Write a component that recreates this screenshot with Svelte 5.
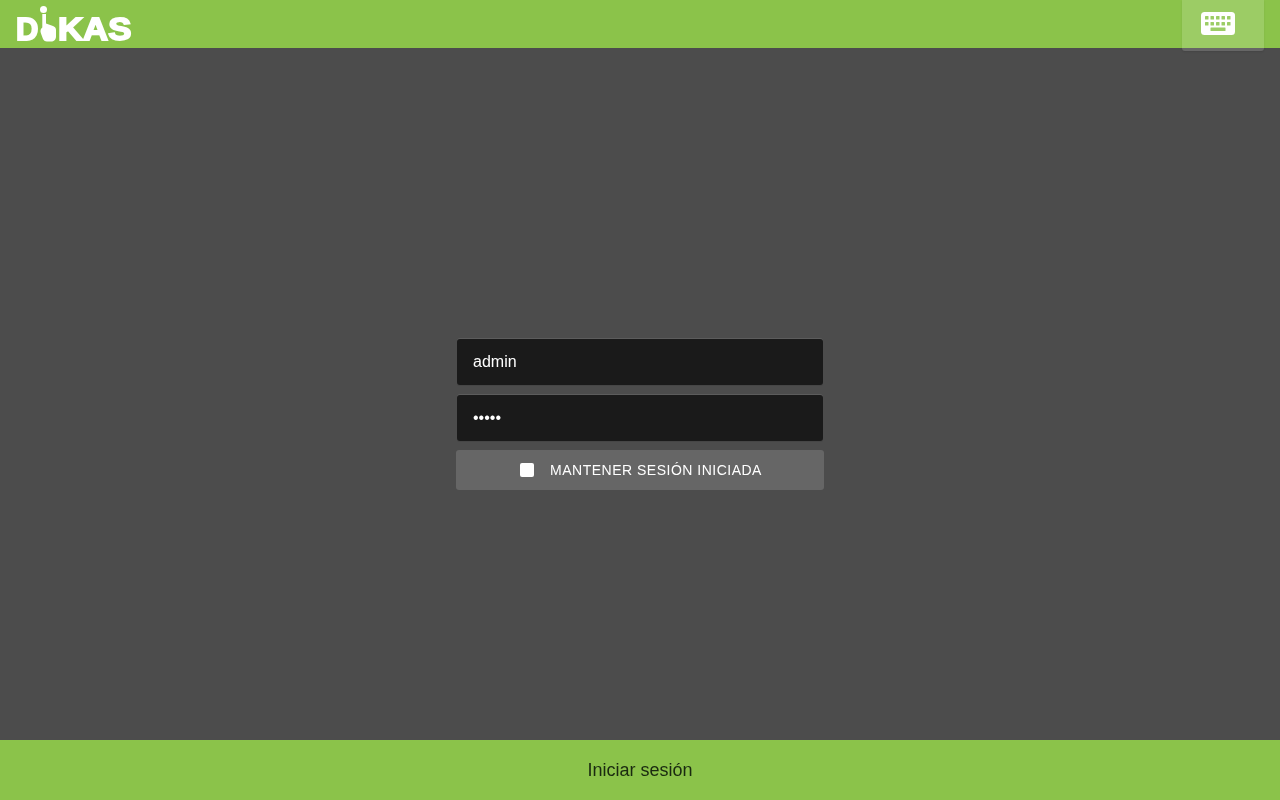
<script>
  const rows = [0, 1];
  const keys = [0, 1, 2, 3, 4];
</script>

<div class="page">
  <header class="top">
    <div class="logo">
      <svg class="pin" width="40" height="42" viewBox="24 4 40 42" aria-hidden="true">
        <circle cx="43.500" cy="9.500" r="3.500" fill="#fff" />
        <path d="M42.300 14H46V23.500L53 26C55 26.800 56 28 56 30V36.500C56 39.500 54 41.500 51 41.500H47C45 41.500 43.500 40.500 42.800 38.500L40.800 33C40 30.500 40.800 28.500 42.300 27.500Z" fill="#fff" />
      </svg>
      <span class="d">D</span><span class="kas">KAS</span>
    </div>
    <button class="kbd" aria-label="Teclado">
      <svg width="34" height="23" viewBox="0 0 34 23" aria-hidden="true">
        <rect width="34" height="23" rx="3.500" fill="#fff" />
        {#each rows as r}
          {#each keys as k}
            <rect x={4 + k * 5.5} y={4 + r * 6} width="3.500" height="3.500" rx="0.500" fill="#9ccd66" />
          {/each}
        {/each}
        <rect x="9.500" y="15.500" width="15" height="3.500" rx="0.500" fill="#9ccd66" />
      </svg>
    </button>
  </header>

  <main class="center">
    <form class="form">
      <input class="field" type="text" value="admin" />
      <input class="field" type="password" value="admin" />
      <label class="keep">
        <span class="box"></span>
        <span>MANTENER SESIÓN INICIADA</span>
      </label>
    </form>
  </main>

  <footer class="bottom">Iniciar sesión</footer>
</div>

<style>
  :global(body) {
    margin: 0;
    background: #4c4c4c;
  }
  .page {
    display: flex;
    flex-direction: column;
    height: 800px;
    font-family: "Liberation Sans", Arial, sans-serif;
    color: #fff;
    overflow: hidden;
    will-change: transform;
  }
  .top {
    flex: 0 0 48px;
    height: 48px;
    background: #8bc34a;
    display: flex;
    justify-content: space-between;
    padding: 0 16px;
    box-sizing: border-box;
    position: relative;
    z-index: 1;
  }
  .logo {
    position: relative;
    width: 118px;
    height: 48px;
    color: #fff;
    font-family: "Liberation Sans", Arial, sans-serif;
    font-weight: 700;
    font-size: 31px;
    line-height: 32px;
    white-space: nowrap;
    -webkit-text-stroke: 1.800px #fff;
  }
  .pin {
    position: absolute;
    left: 8px;
    top: 4px;
  }
  .d {
    position: absolute;
    left: 0;
    top: 14px;
  }
  .kas {
    position: absolute;
    left: 42px;
    top: 14px;
    transform: scaleX(1.12);
    transform-origin: left center;
  }
  .kbd {
    width: 82px;
    height: 51px;
    border: 0;
    background: rgba(255, 255, 255, 0.15);
    border-radius: 0 0 3px 3px;
    display: flex;
    align-items: center;
    justify-content: flex-start;
    box-shadow: 0 1px 2px rgba(0, 0, 0, 0.1);
    padding: 0 0 5px 19px;
    box-sizing: border-box;
  }
  .center {
    flex: 1;
    display: flex;
    align-items: center;
    justify-content: center;
  }
  .form {
    width: 368px;
    display: flex;
    flex-direction: column;
    gap: 8px;
    padding-top: 40px;
  }
  .field {
    box-sizing: border-box;
    width: 366px;
    height: 46px;
    margin: 1px;
    background: #1a1a1a;
    border: 0;
    border-radius: 3px;
    padding: 0 16px;
    color: #fff;
    font: 16px "Liberation Sans", Arial, sans-serif;
    box-shadow: 0 -1px 0 #5c5c5c, 0 1px 0 #464646;
    outline: none;
  }
  .keep {
    height: 40px;
    background: #666;
    border-radius: 3px;
    display: flex;
    align-items: center;
    justify-content: center;
    gap: 16px;
    padding-left: 2px;
    font-size: 14px;
    letter-spacing: 0.500px;
  }
  .box {
    width: 14px;
    height: 14px;
    background: #fff;
    border-radius: 2px;
  }
  .bottom {
    flex: 0 0 60px;
    background: #8bc34a;
    color: #1a2a10;
    display: flex;
    align-items: center;
    justify-content: center;
    font-size: 18px;
  }
</style>
